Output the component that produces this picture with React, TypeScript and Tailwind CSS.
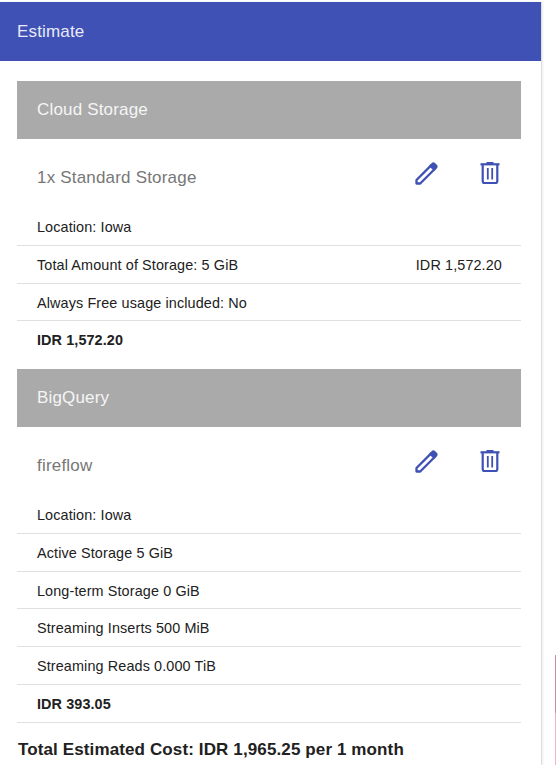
import type { ReactNode } from "react";

function PencilIcon() {
  return (
    <svg width="24" height="24" viewBox="0 0 24 24" fill="none" stroke="#3f51b5" strokeWidth="2.3">
      <path d="M1.500 21.500v-3.500L15.600 3.900l3.600 3.600-14 14z" strokeLinejoin="round" />
      <path
        d="M14 3.600l2.600-2.400a2.600 2.600 0 0 1 3.600 0l1.600 1.600a2.600 2.600 0 0 1 0 3.600l-2.500 2.600z"
        fill="#3f51b5"
        stroke="none"
      />
    </svg>
  );
}

function TrashIcon() {
  return (
    <svg width="20" height="23" viewBox="0 0 20 23" fill="none" stroke="#3f51b5" strokeWidth="2">
      <path d="M0.500 2.300h19" strokeWidth="2.200" />
      <path d="M6.500 1h7" />
      <path d="M2.700 3v16q0 2 1.800 2h11q1.800 0 1.800-2V3" strokeWidth="2.200" />
      <path d="M7.800 6v11.500M12.200 6v11.500" strokeWidth="1.800" />
    </svg>
  );
}

function SectionHeader({ children }: { children: ReactNode }) {
  return (
    <h2 className="flex h-[58.500px] items-center bg-[#aaaaaa] px-5 text-[17px] tracking-[0.17px] text-[#f5f5f5]">
      {children}
    </h2>
  );
}

function ItemTitle({ children }: { children: ReactNode }) {
  return (
    <div className="flex h-[69px] items-start pl-5 text-[17px] tracking-[0.19px] text-[#777777]">
      <h3 className="mt-[27px] flex-1 leading-6">{children}</h3>
      <button aria-label="Edit" className="mt-[23px] mr-[41px]">
        <PencilIcon />
      </button>
      <button aria-label="Delete" className="mt-[23px] mr-[21px]">
        <TrashIcon />
      </button>
    </div>
  );
}

type RowProps = { label: string; price?: string; bold?: boolean; line?: boolean };

function Row({ label, price, bold = false, line = true }: RowProps) {
  return (
    <div
      className={`flex h-[37.8px] items-center justify-between border-b pt-[3px] pr-[19px] pl-5 text-[14.4px] ${
        line ? "border-[#e0e0e0]" : "border-transparent"
      } ${bold ? "font-bold tracking-[0.1px]" : "tracking-[0.12px]"}`}
    >
      <span>{label}</span>
      {price && <span>{price}</span>}
    </div>
  );
}

export default function App() {
  return (
    <div className="flex h-[765px] w-[556px] overflow-hidden bg-white pt-[2px] font-['Liberation_Sans',Arial,sans-serif] text-[#212121]">
      <main className="w-[542px] border-r border-[#dedede] shadow-[1px_0_2px_rgba(0,0,0,0.08)]">
        <h1 className="flex h-[59px] items-center bg-[#3f51b5] pl-[17px] text-[17px] tracking-[0.17px] text-[#e8eaf6]">
          Estimate
        </h1>
        <div className="pt-[19.500px] pr-5 pl-[17px]">
          <section className="h-[288px]">
            <SectionHeader>Cloud Storage</SectionHeader>
            <ItemTitle>1x Standard Storage</ItemTitle>
            <Row label="Location: Iowa" />
            <Row label="Total Amount of Storage: 5 GiB" price="IDR 1,572.20" />
            <Row label="Always Free usage included: No" />
            <Row label="IDR 1,572.20" bold line={false} />
          </section>
          <section>
            <SectionHeader>BigQuery</SectionHeader>
            <ItemTitle>fireflow</ItemTitle>
            <Row label="Location: Iowa" />
            <Row label="Active Storage 5 GiB" />
            <Row label="Long-term Storage 0 GiB" />
            <Row label="Streaming Inserts 500 MiB" />
            <Row label="Streaming Reads 0.000 TiB" />
            <Row label="IDR 393.05" bold />
          </section>
          <p className="mt-[15px] pl-px text-[17px] leading-6 font-bold tracking-[0.12px]">
            Total Estimated Cost: IDR 1,965.25 per 1 month
          </p>
        </div>
      </main>
      <aside className="ml-auto flex w-px flex-col pt-[653px]">
        <div className="h-[58px] bg-[#c98aa8]" />
        <div className="flex-1 bg-[#f3b2cd]" />
      </aside>
    </div>
  );
}
